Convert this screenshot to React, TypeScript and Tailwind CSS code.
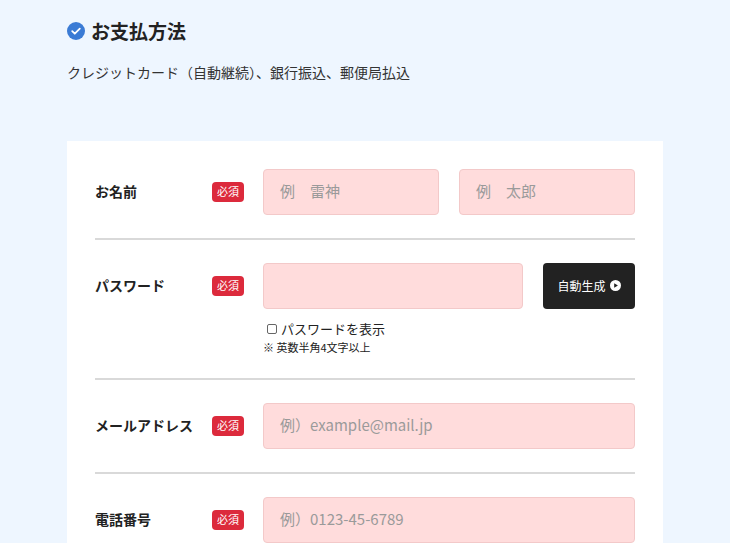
const font = { fontFamily: '"Noto Sans CJK JP", "Noto Sans", sans-serif' };

function Badge() {
    return (
        <span className="flex h-5 w-8 shrink-0 items-center justify-center rounded-sm bg-[#dc2a3c] text-[11px] leading-none text-white">
            必須
        </span>
    );
}

function Input({ placeholder, className }: { placeholder?: string; className?: string }) {
    return (
        <div
            className={
                'flex h-[46px] items-center rounded-[4px] border border-[#f3c9c9] bg-[#ffdcdc] px-4 text-[15px] text-[#9a9a9a] ' +
                (className ?? '')
            }
        >
            {placeholder}
        </div>
    );
}

function Row({ label, children, last }: { label: string; children: React.ReactNode; last?: boolean }) {
    return (
        <div className={'flex items-start py-[23px] ' + (last ? '' : 'border-b-2 border-[#d9d9d9]')}>
            <div className="flex h-[46px] w-[168px] shrink-0 items-center">
                <span className="w-[117px] text-[14px] font-bold text-[#222]">{label}</span>
                <Badge />
            </div>
            <div className="flex-1">{children}</div>
        </div>
    );
}

export default function App() {
    return (
        <div className="min-h-[543px] bg-[#eef6ff] px-[67px] pt-[17px]" style={font}>
            <div className="flex items-center gap-1.5">
                <svg width="18" height="18" viewBox="0 0 18 18">
                    <circle cx="9" cy="9" r="9" fill="#3a7bd5" />
                    <path d="M5.2 9.2l2.6 2.5 5-5" stroke="#fff" strokeWidth="1.8" fill="none" strokeLinecap="round" strokeLinejoin="round" />
                </svg>
                <h2 className="text-[19px] font-bold text-[#222]">お支払方法</h2>
            </div>
            <p className="mt-[16px] text-[14px] text-[#333]">クレジットカード（自動継続）、銀行振込、郵便局払込</p>
            <div className="mt-[58px] bg-white px-7 pt-[5px]">
                <Row label="お名前">
                    <div className="flex gap-5">
                        <Input placeholder="例　雷神" className="flex-1" />
                        <Input placeholder="例　太郎" className="flex-1" />
                    </div>
                </Row>
                <Row label="パスワード">
                    <div className="flex gap-5">
                        <Input className="flex-1" />
                        <button className="flex h-[46px] w-[92px] items-center justify-center gap-1 rounded-[4px] bg-[#222] text-[12px] text-white">
                            自動生成
                            <svg width="11" height="11" viewBox="0 0 12 12">
                                <circle cx="6" cy="6" r="6" fill="#fff" />
                                <path d="M4.6 3.5v5l4-2.5z" fill="#222" />
                            </svg>
                        </button>
                    </div>
                    <label className="mt-[10px] flex items-center gap-1 px-1 text-[13px] leading-5 text-[#222]">
                        <span className="h-[10px] w-[10px] rounded-[2px] border border-[#666] bg-white" />
                        パスワードを表示
                    </label>
                    <p className="text-[11px] leading-4 text-[#222]">※ 英数半角4文字以上</p>
                </Row>
                <Row label="メールアドレス">
                    <Input placeholder="例）example@mail.jp" />
                </Row>
                <Row label="電話番号" last>
                    <Input placeholder="例）0123-45-6789" />
                </Row>
            </div>
        </div>
    );
}
